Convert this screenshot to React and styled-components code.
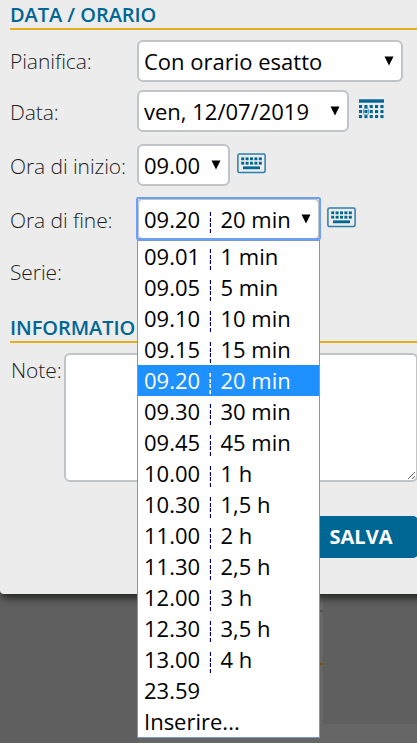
import React from 'react';
import styled, { createGlobalStyle, css } from 'styled-components';

const colors = {
  brand: '#006694',
  gold: '#e6ae1e',
  panel: '#ececec',
  border: '#bfc4c8',
  label: '#1e1e1e',
  focus: '#6ca0f6',
  listBorder: '#7896cf',
  highlight: '#1e90ff',
};

const GlobalStyle = createGlobalStyle`
  html, body {
    margin: 0;
    height: 100%;
    overflow: hidden;
  }
  * {
    box-sizing: border-box;
  }
  body {
    background: #5f5f5f;
    font-family: 'Open Sans', 'Noto Sans', sans-serif;
  }
`;

const Page = styled.div`
  position: relative;
  width: 417px;
  height: 743px;
  overflow: hidden;
  background: #5f5f5f;
`;

const Backdrop = styled.div`
  position: absolute;
  left: 138px;
  right: 0;
  bottom: 0;
  height: 149px;
  background: #666;
`;

const BackdropPanel = styled.div`
  position: absolute;
  top: 0;
  left: 185px;
  right: 0;
  height: 130px;
  background: #5f5f5f;
`;

const BackdropRule = styled.div`
  position: absolute;
  top: ${({ $top }) => $top}px;
  left: 180px;
  width: 5px;
  height: 2px;
  background: ${({ $color }) => $color};
`;

const Panel = styled.form`
  position: relative;
  height: 594px;
  width: 430px;
  padding-left: 10px;
  background: ${colors.panel};
  border-radius: 0 0 0 4px;
  box-shadow: 2px 3px 8px 1px #20231f;
`;

const SectionTitle = styled.h2`
  height: 30px;
  margin: ${({ $gap = 0 }) => $gap}px 0 0;
  border-bottom: 2px solid ${colors.gold};
  color: ${colors.brand};
  font-size: 20px;
  font-weight: 600;
  line-height: 29px;
  letter-spacing: -0.05px;
  white-space: nowrap;
`;

const Row = styled.div`
  display: flex;
  align-items: center;
  height: 42px;
  margin-top: ${({ $gap }) => $gap}px;
`;

const Label = styled.label`
  flex: none;
  width: ${({ $width = 127 }) => $width}px;
  padding-top: ${({ $offset = 2 }) => $offset}px;
  color: ${colors.label};
  font-size: 21px;
  font-weight: 300;
  line-height: 30px;
  letter-spacing: -0.08px;
  white-space: nowrap;
`;

const SelectWrapper = styled.div`
  position: relative;
  flex: none;
  width: ${({ $width }) => $width}px;
`;

const SelectBox = styled.button.attrs({ type: 'button' })`
  position: relative;
  display: flex;
  align-items: center;
  justify-content: space-between;
  width: 100%;
  height: 42px;
  padding: 0 7.5px 0 5px;
  border: 2px solid ${colors.border};
  border-radius: 6px;
  background: #fff;
  color: #000;
  font: 400 22px/30px 'Open Sans', 'Noto Sans', sans-serif;
  white-space: pre;
  ${({ $open }) => $open && css`
    &::after {
      content: '';
      position: absolute;
      inset: -3px -3px -2px;
      border: 2px solid ${colors.focus};
      border-radius: 2px;
    }
  `}
`;

const Arrow = styled.svg`
  flex: none;
  width: 10px;
  height: 10px;
`;

const OptionText = styled.span`
  display: flex;
  align-items: center;
`;

const Separator = styled.span`
  width: 2px;
  height: 21px;
  margin: 6px 9.4px 0 9px;
  background: ${({ $active }) => ($active
    ? 'linear-gradient(to right, #8fd0ff 1px, #fff 1px)'
    : 'linear-gradient(to right, #ffdcae 1px, #00006e 1px)')};
  mask-image: repeating-linear-gradient(to bottom, #000 0 4px, transparent 4px 5.67px);
`;

const OptionList = styled.ul`
  position: absolute;
  z-index: 1;
  top: 42px;
  left: 0;
  width: 183px;
  margin: 0;
  padding: 0;
  border: 1px solid ${colors.listBorder};
  background: #fff;
  list-style: none;
`;

const Option = styled.li`
  display: flex;
  align-items: center;
  height: 31px;
  padding-left: 6px;
  background: ${({ $active }) => ($active ? colors.highlight : '#fff')};
  color: ${({ $active }) => ($active ? '#fff' : '#000')};
  font-size: 22px;
  line-height: 31px;
`;

const CalendarSvg = styled.svg`
  width: 26px;
  height: 21px;
  margin: 0 0 3px 9px;
`;

const KeyboardSvg = styled.svg`
  width: 29px;
  height: 21px;
  margin: 0 0 3px 7px;
`;

const NoteRow = styled.div`
  display: flex;
  align-items: flex-start;
  margin-top: 10px;
  padding-left: 1px;
`;

const NoteInput = styled.textarea`
  display: block;
  width: 354px;
  height: 129px;
  border: 2px solid ${colors.border};
  border-radius: 6px;
  background: #fff;
`;

const Actions = styled.div`
  display: flex;
  justify-content: flex-end;
  width: 408px;
  margin-top: 34px;
`;

const SaveButton = styled.button.attrs({ type: 'button' })`
  width: 114px;
  height: 42px;
  padding: 0;
  border: 0;
  border-radius: 5px;
  background: ${colors.brand};
  color: #fff;
  font: 700 20px/42px 'Open Sans', 'Noto Sans', sans-serif;
`;

const endTimes = [
  ['09.01', '1 min'],
  ['09.05', '5 min'],
  ['09.10', '10 min'],
  ['09.15', '15 min'],
  ['09.20', '20 min'],
  ['09.30', '30 min'],
  ['09.45', '45 min'],
  ['10.00', '1 h'],
  ['10.30', '1,5 h'],
  ['11.00', '2 h'],
  ['11.30', '2,5 h'],
  ['12.00', '3 h'],
  ['12.30', '3,5 h'],
  ['13.00', '4 h'],
  ['23.59'],
  ['Inserire...'],
];

const TimeText = ({ time, duration, active }) => (
  <OptionText>
    {time}
    {duration && <Separator $active={active} />}
    {duration}
  </OptionText>
);

const Select = ({ width, open, value, children }) => (
  <SelectWrapper $width={width}>
    <SelectBox $open={open}>
      {value}
      <Arrow viewBox="0 0 10 10"><path d="M0.5 0.5h9L5 9.5z" /></Arrow>
    </SelectBox>
    {children}
  </SelectWrapper>
);

const CalendarIcon = () => (
  <CalendarSvg viewBox="0 0 26 21" fill={colors.brand}>
    <path d="M1 0.3h25v3.4H1z" />
    {[6, 11, 16].map(y => [1, 6.4, 11.7, 17, 22.4].map(x => (
      <rect key={`${x}-${y}`} x={x} y={y} width="3.1" height="3.1" />
    )))}
    <rect x="5.5" y="9.5" width="5" height="6.4" rx="1.5" fill="none" stroke="#5f9fc0" />
  </CalendarSvg>
);

const KeyboardIcon = () => (
  <KeyboardSvg viewBox="0 0 29 21" fill={colors.brand}>
    <rect x="0.9" y="1" width="27.2" height="18.6" rx="1.5" fill="none" stroke="#2b7fa8" strokeWidth="1.5" />
    {[4.4, 8.8].map(y => [4.2, 8.6, 13, 17.4, 21.8].map(x => (
      <rect key={`${x}-${y}`} x={x} y={y} width="3" height="2.8" />
    )))}
    <path d="M6 13.4h17v2.8H6z" />
  </KeyboardSvg>
);

const App = () => (
  <>
    <GlobalStyle />
    <Page>
      <Backdrop>
        <BackdropPanel />
        <BackdropRule $top={16} $color="#505050" />
        <BackdropRule $top={69} $color="#725314" />
      </Backdrop>
      <Panel>
        <SectionTitle>DATA / ORARIO</SectionTitle>
        <Row $gap={10}>
          <Label $offset={0}>Pianifica:</Label>
          <Select width={266} value="Con orario esatto" />
        </Row>
        <Row $gap={8}>
          <Label>Data:</Label>
          <Select width={212} value="ven, 12/07/2019" />
          <CalendarIcon />
        </Row>
        <Row $gap={12}>
          <Label>Ora di inizio:</Label>
          <Select width={93} value="09.00" />
          <KeyboardIcon />
        </Row>
        <Row $gap={12}>
          <Label>Ora di fine:</Label>
          <Select width={183} open value={<TimeText time="09.20" duration="20 min" />}>
            <OptionList>
              {endTimes.map(([time, duration]) => (
                <Option key={time} $active={time === '09.20'}>
                  <TimeText time={time} duration={duration} active={time === '09.20'} />
                </Option>
              ))}
            </OptionList>
          </Select>
          <KeyboardIcon />
        </Row>
        <Row $gap={11}>
          <Label $offset={0}>Serie:</Label>
        </Row>
        <SectionTitle $gap={20}>INFORMATIO</SectionTitle>
        <NoteRow>
          <Label $width={53}>Note:</Label>
          <NoteInput />
        </NoteRow>
        <Actions>
          <SaveButton>SALVA</SaveButton>
        </Actions>
      </Panel>
    </Page>
  </>
);

export default App;
